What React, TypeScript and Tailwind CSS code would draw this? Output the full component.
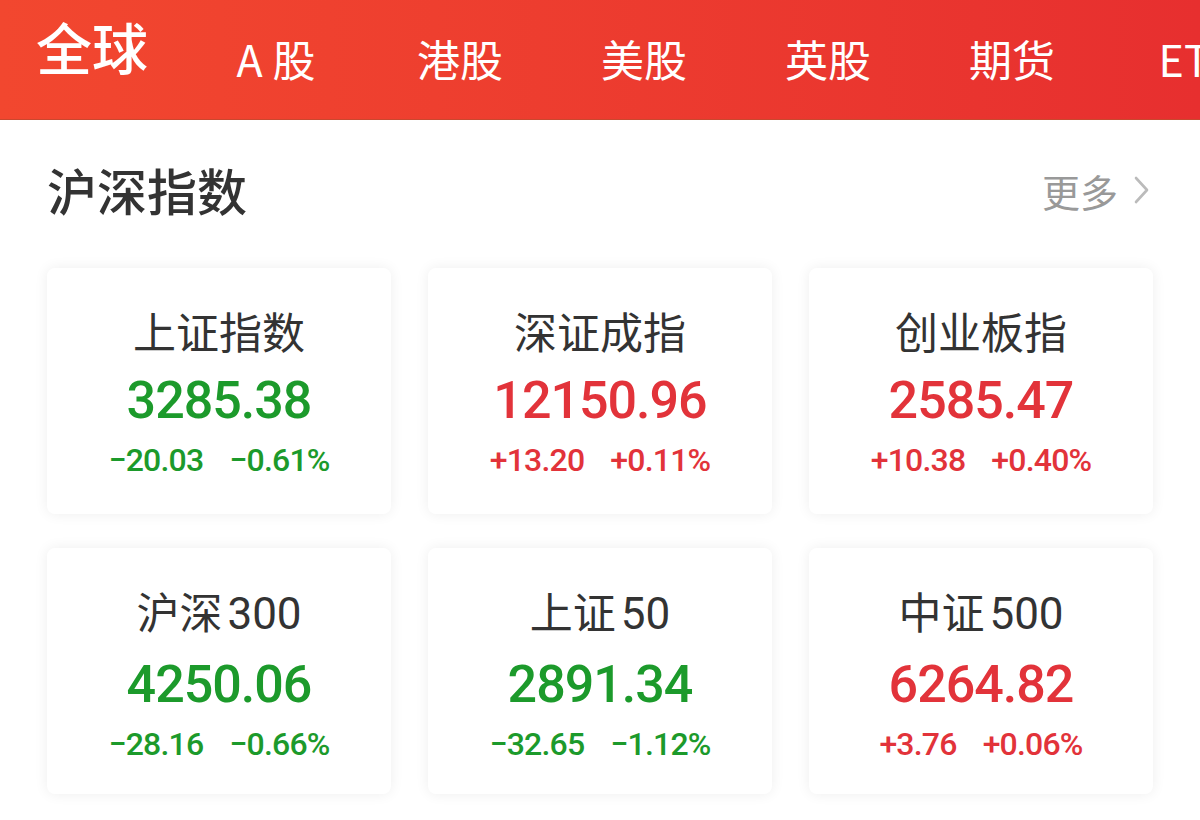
import React from 'react';

type IndexItem = {
  name: string;
  suffix?: string;
  price: string;
  change: string;
  percent: string;
  up: boolean;
};

const tabs = ['全球', 'A 股', '港股', '美股', '英股', '期货', 'ETF'];

const indices: IndexItem[] = [
  { name: '上证指数', price: '3285.38', change: '−20.03', percent: '−0.61%', up: false },
  { name: '深证成指', price: '12150.96', change: '+13.20', percent: '+0.11%', up: true },
  { name: '创业板指', price: '2585.47', change: '+10.38', percent: '+0.40%', up: true },
  { name: '沪深', suffix: '300', price: '4250.06', change: '−28.16', percent: '−0.66%', up: false },
  { name: '上证', suffix: '50', price: '2891.34', change: '−32.65', percent: '−1.12%', up: false },
  { name: '中证', suffix: '500', price: '6264.82', change: '+3.76', percent: '+0.06%', up: true },
];

const cjk = { fontFamily: '"Noto Sans CJK SC", "Noto Sans", sans-serif' };
const num = { fontFamily: 'Roboto, "Liberation Sans", sans-serif' };

const IndexCard: React.FC<{ item: IndexItem }> = ({ item }) => {
  const color = item.up ? 'text-[#e2333a]' : 'text-[#1c9a2b]';
  return (
    <div className="h-[246px] bg-white rounded-[8px] shadow-[0_0_14px_rgba(0,0,0,0.07)] flex flex-col items-center pt-[37px]">
      <div className="text-[43px] leading-[50px] text-[#333]" style={cjk}>
        {item.name}
        {item.suffix && <span className="ml-[5px] text-[44px]" style={num}>{item.suffix}</span>}
      </div>
      <div className={`mt-[18px] text-[52px] leading-[56px] font-medium tracking-[-1px] ${color}`} style={num}>
        {item.price}
      </div>
      <div className={`mt-[13px] flex gap-[26px] text-[32px] leading-[36px] font-medium tracking-[-0.8px] ${color}`} style={num}>
        <span>{item.change}</span>
        <span>{item.percent}</span>
      </div>
    </div>
  );
};

export default function App() {
  return (
    <div className="w-[1200px] h-[820px] bg-white overflow-hidden" style={cjk}>
      <div className="h-[120px] bg-gradient-to-r from-[#f2472f] to-[#e72f2f] border-b border-[#c9482f] flex overflow-hidden">
        {tabs.map((t, i) => (
          <div
            key={t}
            className={`w-[184px] shrink-0 text-center text-white whitespace-nowrap ${
              i === 0 ? 'text-[56px] leading-[60px] font-medium pt-[16px]' : 'text-[43px] leading-[50px] pt-[33px]'
            }`}
          >
            {t}
          </div>
        ))}
      </div>

      <div className="px-[47px]">
        <div className="flex items-center justify-between h-[148px]">
          <div className="text-[50px] font-medium text-[#333] mt-[-10px]">沪深指数</div>
          <div className="flex items-center gap-[16px] text-[38px] text-[#999] mt-[-8px]">
            <span>更多</span>
            <svg width="16" height="28" viewBox="0 0 16 28" fill="none" className="mr-[3px]">
              <path d="M2 2l11 12L2 26" stroke="#bbb" strokeWidth="2.6" strokeLinecap="round" strokeLinejoin="round" />
            </svg>
          </div>
        </div>

        <div className="grid grid-cols-3 gap-x-[37px] gap-y-[34px]">
          {indices.map((it) => (
            <IndexCard key={it.name + (it.suffix ?? '')} item={it} />
          ))}
        </div>
      </div>
    </div>
  );
}
